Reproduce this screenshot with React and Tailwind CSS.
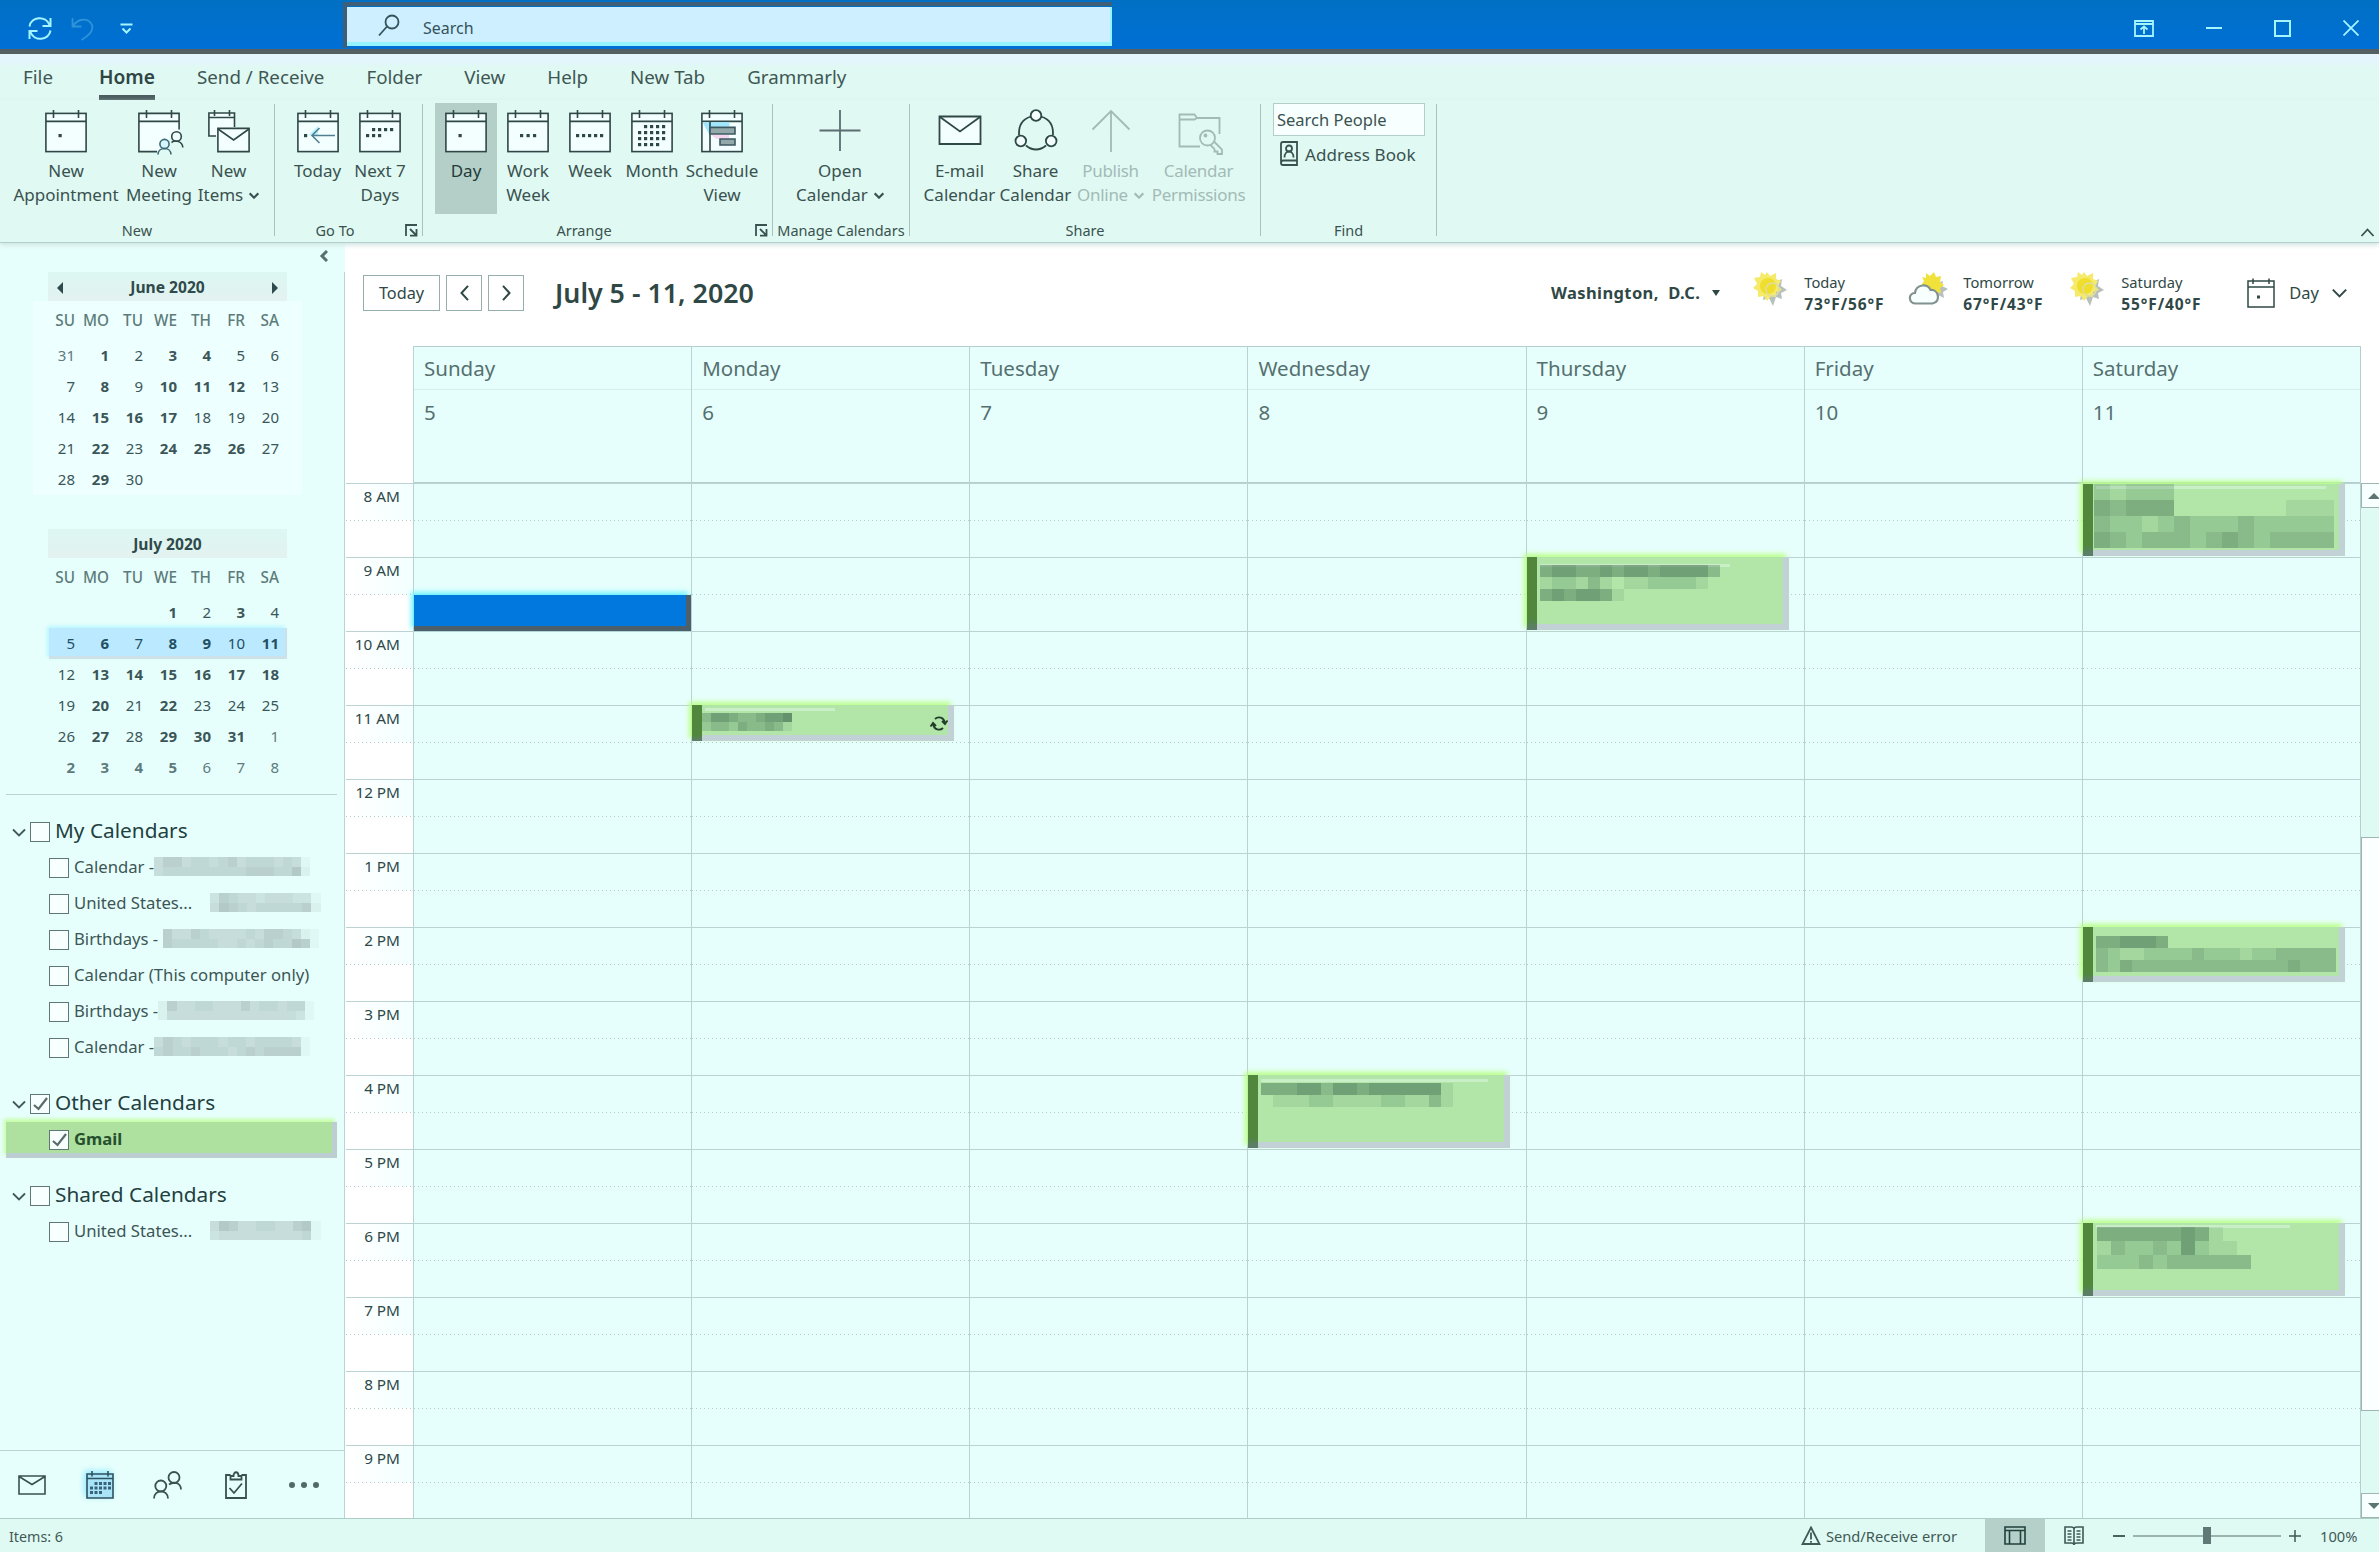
const weekDays = ['SU', 'MO', 'TU', 'WE', 'TH', 'FR', 'SA'];

// "b" marks a day with appointments, "g" a day of the neighbouring month
const months = [
  {
    name: 'June 2020',
    arrows: true,
    selected: -1,
    weeks: [
      '31g 1b 2 3b 4b 5 6',
      '7 8b 9 10b 11b 12b 13',
      '14 15b 16b 17b 18 19 20',
      '21 22b 23 24b 25b 26b 27',
      '28 29b 30 - - - -',
    ],
  },
  {
    name: 'July 2020',
    arrows: false,
    selected: 1,
    weeks: [
      '- - - 1b 2 3b 4',
      '5 6b 7 8b 9b 10 11b',
      '12 13b 14b 15b 16b 17b 18b',
      '19 20b 21 22b 23 24 25',
      '26 27b 28 29b 30b 31b 1g',
      '2bg 3bg 4bg 5bg 6g 7g 8g',
    ],
  },
];

const calendarGroups = [
  {
    title: 'My Calendars',
    checked: false,
    items: [
      { name: 'Calendar -', left: 'ml-0', mask: ['57756656756665651', '56666666667776682'] },
      { name: 'United States...', left: 'ml-[18px]', mask: ['476554555441', '587656666672'] },
      { name: 'Birthdays -', left: 'ml-[5px]', mask: ['75576555565776521', '76666655656766871'] },
      { name: 'Calendar (This computer only)' },
      { name: 'Birthdays -', left: 'ml-0', mask: ['27556655575665661', '25555555555555541'] },
      { name: 'Calendar -', left: 'ml-0', mask: ['57656665665666651', '67667666567677771'] },
    ],
  },
  {
    title: 'Other Calendars',
    checked: true,
    items: [{ name: 'Gmail', checked: true, active: true }],
  },
  {
    title: 'Shared Calendars',
    checked: false,
    items: [{ name: 'United States...', left: 'ml-[18px]', mask: ['587556655781', '455555555561'] }],
  },
];

const days = [
  { name: 'Sunday', date: 5, events: [] },
  {
    name: 'Monday',
    date: 6,
    events: [
      { top: 222, height: 36, cell: 9, padTop: 8, padLeft: 0, recurring: true, strip: { top: 3, width: 130 }, mask: ['3554334556', '2332433431'] },
    ],
  },
  { name: 'Tuesday', date: 7, events: [] },
  {
    name: 'Wednesday',
    date: 8,
    events: [
      { top: 592, height: 73, cell: 12, padTop: 8, padLeft: 3, strip: { top: 4, width: 227 }, mask: ['4445535545555551', '0111221111221131'] },
    ],
  },
  {
    name: 'Thursday',
    date: 9,
    events: [
      {
        top: 74,
        height: 73,
        cell: 12,
        padTop: 8,
        padLeft: 3,
        strip: { top: 7, width: 190 },
        mask: ['455445455455553', '122131011222210', '454554100000000'],
      },
    ],
  },
  { name: 'Friday', date: 10, events: [] },
  {
    name: 'Saturday',
    date: 11,
    events: [
      {
        top: 1,
        height: 72,
        cell: 16,
        padTop: 0,
        padLeft: 1,
        strip: { top: 2, width: 230 },
        mask: ['212220000000000', '434440000000111', '322123222322222', '432333234323333'],
      },
      { top: 444, height: 55, cell: 12, padTop: 9, padLeft: 3, mask: ['44555400000000000000', '32112222322212233333', '32433333333333334333'] },
      { top: 740, height: 73, cell: 14, padTop: 4, padLeft: 4, strip: { top: 2, width: 194 }, mask: ['44444454100', '13223252110', '22232333333'] },
    ],
  },
];

const hours = ['8 AM', '9 AM', '10 AM', '11 AM', '12 PM', '1 PM', '2 PM', '3 PM', '4 PM', '5 PM', '6 PM', '7 PM', '8 PM', '9 PM'];

// Pixelated block that hides private text
const Mask = ({ rows, width, height, color }) => (
  <div>
    {rows.map((row, i) => (
      <div key={i} className="flex">
        {row.split('').map((level, j) => (
          <div key={j} className={color} style={{ width, height, opacity: level / 10 }} />
        ))}
      </div>
    ))}
  </div>
);

const Chevron = ({ className, d = 'M1 1.5l6 6 6-6', weight = 1.8 }) => (
  <svg className={className} viewBox="0 0 14 9" fill="none" stroke="currentColor" strokeWidth={weight}>
    <path d={d} />
  </svg>
);

const CalendarIcon = ({ dots = [], children }) => (
  <svg className="h-11 w-[42px]" viewBox="0 0 42 44" fill="none" stroke="#2f4846" strokeWidth="1.6">
    <rect x="0.9" y="4.4" width="40.2" height="38.2" fill="#f3ffff" />
    <path d="M1 12.4h40M8.5 1v8M33.5 1v8" />
    {dots.map(([x, y]) => (
      <rect key={`${x}-${y}`} x={x} y={y} width="3.2" height="3.2" fill="#2f4846" stroke="none" />
    ))}
    {children}
  </svg>
);

const monthDots = [
  [13, 16], [19, 16], [25, 16], [31, 16],
  [7, 22], [13, 22], [19, 22], [25, 22], [31, 22],
  [7, 28], [13, 28], [19, 28], [25, 28], [31, 28],
  [7, 34], [13, 34], [19, 34], [25, 34],
];

const icons = {
  day: <CalendarIcon dots={[[13.5, 25]]} />,
  meeting: (
    <svg className="h-[46px] w-[46px]" viewBox="0 0 46 46" fill="none" stroke="#2f4846" strokeWidth="1.6">
      <path d="M19 42.6H.9V4.4h40.2v16" fill="#f3ffff" />
      <path d="M1 12.4h40M8.5 1v8M33.5 1v8" />
      <g stroke="#3b6a73">
        <circle cx="26.5" cy="35" r="4.6" fill="#d6f6ff" />
        <path d="M20 45.5c0-8 13-8 13 0" />
      </g>
      <circle cx="38.5" cy="27.5" r="4.8" fill="#effcff" />
      <path d="M33.5 33.5c4-3 11-1 11.3 5" />
    </svg>
  ),
  items: (
    <svg className="h-11 w-[42px]" viewBox="0 0 42 44" fill="none" stroke="#2f4846" strokeWidth="1.6">
      <path d="M8 27H.9V4h25.6v14" fill="#f3ffff" />
      <path d="M1 8.5h25M6.5 1v6M21.5 1v6" />
      <path d="M9.9 19.4h31.2v23.2H9.9z" fill="#f3ffff" />
      <path d="M10 20l15.6 11L41 20" />
    </svg>
  ),
  today: (
    <CalendarIcon dots={[[7, 25]]}>
      <path d="M12 26l9-9v10z" fill="#b9f0ff" stroke="none" />
      <path d="M15 26.5h23M22.5 19L15 26.5l7.500 7.500" stroke="#4f7f90" />
    </CalendarIcon>
  ),
  next7: <CalendarIcon dots={[[13, 19], [19, 19], [25, 19], [31, 19], [7, 25], [13, 25], [19, 25]]} />,
  workWeek: <CalendarIcon dots={[[13, 25], [19.5, 25], [26, 25]]} />,
  week: <CalendarIcon dots={[[7, 25], [13, 25], [19, 25], [25, 25], [31, 25]]} />,
  month: <CalendarIcon dots={monthDots} />,
  schedule: (
    <CalendarIcon>
      <path d="M1.500 13.200h27v4.500h-20v8z" fill="#9fe6ff" stroke="none" />
      <path d="M10 25.800h18v4H15z" fill="#f6d6ee" stroke="none" />
      <path d="M9 13v29" />
      <path d="M9 18.400h25v6.600H9zM19 30h15v6H19z" fill="#93a9a9" stroke="#3d5860" />
    </CalendarIcon>
  ),
  open: (
    <svg className="h-11 w-[42px]" viewBox="0 0 42 44" fill="none" stroke="#5a6d70" strokeWidth="1.8">
      <path d="M21 1v41M.5 21.500h41" />
    </svg>
  ),
  email: (
    <svg className="h-11 w-[44px]" viewBox="0 0 44 44" fill="none" stroke="#2f4846" strokeWidth="1.8">
      <path d="M1.500 7.500h41v27.500h-41z" fill="#f3ffff" />
      <path d="M2 8l20 14.500L42 8" />
    </svg>
  ),
  share: (
    <svg className="h-11 w-[44px]" viewBox="0 0 44 44" fill="none" stroke="#2f4846" strokeWidth="1.8">
      <path d="M17 7.500C8.500 10 4.500 17 5 26M27 7.500C35.500 10 39.500 17 39 26M12 36.500c6 5.300 14 5.300 20 0" />
      <circle cx="22" cy="6.500" r="5.300" fill="#f3ffff" />
      <circle cx="6.800" cy="32" r="5.300" fill="#f3ffff" />
      <circle cx="37.200" cy="32" r="5.300" fill="#f3ffff" />
    </svg>
  ),
  publish: (
    <svg className="h-11 w-[42px]" viewBox="0 0 42 44" fill="none" stroke="#a3bbb6" strokeWidth="1.8">
      <path d="M21 2v41M2.500 20.500L21 2l18.500 18.500" />
    </svg>
  ),
  permissions: (
    <svg className="h-[46px] w-[46px]" viewBox="0 0 46 46" fill="none" stroke="#a3bbb6" strokeWidth="1.8">
      <path d="M22 37.500H1.500V5.500h15l2.500 3.500h22.500v16M1.500 10.500h15l2.500-1.500" />
      <circle cx="29.500" cy="29" r="7.500" />
      <path d="M32.500 36l4 4v2.500h3v2.500h4.500v-4.500L35.500 32" />
      <circle cx="27.500" cy="26.500" r="1" />
    </svg>
  ),
};

const ribbonGroups = [
  {
    name: 'New',
    width: 'w-[274px]',
    pad: 'pl-[6px]',
    items: [
      { icon: icons.day, lines: ['New', 'Appointment'], width: 'w-[120px]' },
      { icon: icons.meeting, lines: ['New', 'Meeting'], width: 'w-[66px]', wide: true },
      { icon: icons.items, lines: ['New', 'Items'], width: 'w-[73px]', menu: true },
    ],
  },
  {
    name: 'Go To',
    width: 'w-[147px]',
    pad: 'pl-[10px]',
    launcher: true,
    items: [
      { icon: icons.today, lines: ['Today'], width: 'w-[65px]' },
      { icon: icons.next7, lines: ['Next 7', 'Days'], width: 'w-[60px]' },
    ],
  },
  {
    name: 'Arrange',
    width: 'w-[349px]',
    pad: 'pl-[12px]',
    launcher: true,
    items: [
      { icon: icons.day, lines: ['Day'], width: 'w-[62px]', active: true },
      { icon: icons.workWeek, lines: ['Work', 'Week'], width: 'w-[62px]' },
      { icon: icons.week, lines: ['Week'], width: 'w-[62px]' },
      { icon: icons.month, lines: ['Month'], width: 'w-[62px]' },
      { icon: icons.schedule, lines: ['Schedule', 'View'], width: 'w-[78px]' },
    ],
  },
  {
    name: 'Manage Calendars',
    width: 'w-[136px]',
    pad: 'pl-[22px]',
    items: [{ icon: icons.open, lines: ['Open', 'Calendar'], width: 'w-[90px]', menu: true }],
  },
  {
    name: 'Share',
    width: 'w-[350px]',
    pad: 'pl-[12px]',
    items: [
      { icon: icons.email, lines: ['E-mail', 'Calendar'], width: 'w-[75px]' },
      { icon: icons.share, lines: ['Share', 'Calendar'], width: 'w-[77px]' },
      { icon: icons.publish, lines: ['Publish', 'Online'], width: 'w-[73px]', menu: true, disabled: true },
      { icon: icons.permissions, lines: ['Calendar', 'Permissions'], width: 'w-[103px]', wide: true, disabled: true },
    ],
  },
];

const TitleBar = () => (
  <div className="flex h-[54px] shrink-0 items-center border-b-[5px] border-[#535f62] bg-linear-to-b from-[#0070c4] to-[#006fd6] text-[#a5f5ff]">
    <div className="flex w-[343px] items-center pl-[27px] pt-[8px]">
      <svg className="h-[25px] w-[26px]" viewBox="0 0 26 25" fill="none" stroke="currentColor" strokeWidth="2">
        <path d="M2.500 10.500C4 .5 19 -1 22.500 9M23.500 2v8h-8M23.500 14.500C22 24.500 7 26 3.500 16M2.500 23v-8h8" />
      </svg>
      <svg className="ml-[18px] h-[24px] w-[23px] text-[#2e93d8]" viewBox="0 0 23 24" fill="none" stroke="currentColor" strokeWidth="1.800">
        <path d="M1.500 1v8.500h9M2 9C7 1 17 1 20.500 7c3 6-3 12-10 16" />
      </svg>
      <svg className="ml-[26px] h-[12px] w-[13px]" viewBox="0 0 13 12" fill="none" stroke="currentColor" strokeWidth="2">
        <path d="M.5 1.500h12M2.500 5.500l4 4 4-4" />
      </svg>
    </div>
    <div className="mt-[1px] flex h-[46px] w-[769px] border-t-4 border-l-4 border-[#3f5f78]">
      <div className="mt-[1px] flex h-[39px] grow items-center border-r-2 border-b-4 border-[#93f3ff] bg-[#cdefff] pl-[31px] text-[16px] text-[#36525a]">
        <svg className="mt-[2px] mr-[23px] h-[23px] w-[22px]" viewBox="0 0 22 23" fill="none" stroke="currentColor" strokeWidth="1.800">
          <circle cx="14" cy="8" r="6.500" />
          <path d="M9 12.500L1 21.500" />
        </svg>
        <span className="pt-[7px]">Search</span>
      </div>
    </div>
    <div className="ml-auto flex items-center gap-[52px] pt-[7px] pr-[20px]">
      <svg className="h-[17px] w-[20px]" viewBox="0 0 20 17" fill="none" stroke="currentColor" strokeWidth="1.800">
        <path d="M1 1h18v15H1zM1 4h18M10 14V7M6.500 9.500L10 6.500l3.500 3" />
      </svg>
      <div className="h-[2px] w-[16px] bg-[#a5f5ff]" />
      <div className="h-[17px] w-[17px] border-2 border-[#a5f5ff]" />
      <svg className="h-[16px] w-[16px]" viewBox="0 0 16 16" stroke="currentColor" strokeWidth="1.800">
        <path d="M.5.5l15 15M15.500.5l-15 15" />
      </svg>
    </div>
  </div>
);

const Tabs = () => (
  <div className="flex h-[46px] items-center gap-[42px] bg-linear-to-b from-[#e5f5ff] from-10% to-[#e0f9f3] to-30% pl-[23px] text-[18.750px] text-[#3f5754]">
    {['File', 'Home', 'Send / Receive', 'Folder', 'View', 'Help', 'New Tab', 'Grammarly'].map((tab) => (
      <div
        key={tab}
        className={
          tab === 'Home'
            ? 'mt-[8px] ml-[4px] flex h-[38px] flex-col border-b-[5px] border-[#4b5d5f] text-[19.200px] font-semibold leading-[30px] text-[#2e4644]'
            : ''
        }
      >
        {tab}
      </div>
    ))}
  </div>
);

const RibbonItem = ({ item }) => (
  <div
    className={`flex h-[111px] flex-col items-center pt-[6px] ${item.width} ${item.active ? 'bg-[#b4cfc8] text-[#223b38]' : ''} ${
      item.disabled ? 'tracking-[-0.3px] text-[#a3bbb6]' : ''
    }`}
  >
    <div className={`h-[44px] ${item.wide ? 'pl-[4px]' : ''}`}>{item.icon}</div>
    <div className="mt-[6px] text-center text-[17px] leading-6 whitespace-nowrap">
      {item.lines.map((line, i) => (
        <div key={line} className="flex items-center justify-center">
          {line}
          {item.menu && i === 1 && <Chevron className="ml-[6px] h-[7px] w-[10px]" weight={3} />}
        </div>
      ))}
    </div>
  </div>
);

const Separator = () => <div className="mt-[1px] h-[132px] w-px bg-[#a9c2be]" />;

const Ribbon = () => (
  <div className="relative z-10 flex h-[143px] shrink-0 border-b border-[#b3cfcb] bg-[#e0f9f3] pt-[3px] text-[#3a524f] shadow-[0_2px_5px_#cfe3e0]">
    {ribbonGroups.map((group) => (
      <div key={group.name} className="flex">
        <div className={group.width}>
          <div className={`flex ${group.pad}`}>
            {group.items.map((item) => (
              <RibbonItem key={item.lines.join(' ')} item={item} />
            ))}
          </div>
          <div className="mt-1 flex h-6 items-center">
            <div className="grow text-center text-[14.500px] leading-6 whitespace-nowrap">{group.name}</div>
            {group.launcher && (
              <svg className="mr-[4px] ml-[10px] h-[13px] w-[13px]" viewBox="0 0 13 13" fill="none" stroke="currentColor" strokeWidth="1.800">
                <path d="M1 12V1h11M5 5l6 6M11.500 5v6.700H5" />
              </svg>
            )}
          </div>
        </div>
        <Separator />
      </div>
    ))}
    <div className="w-[175px]">
      <div className="flex h-[111px] flex-col pl-[12px]">
        <div className="flex h-[33px] w-[152px] items-center border border-[#b3cdca] bg-[#f8ffff] pt-[2px] pl-[3px] text-[16.500px]">Search People</div>
        <div className="mt-[4px] flex items-center pl-[7px] text-[17px] tracking-[0.1px]">
          <svg className="mr-[7px] h-[25px] w-[18px]" viewBox="0 0 18 25" fill="none" stroke="currentColor" strokeWidth="1.800">
            <path d="M1 3q0-2 2-2h14v23H3q-2 0-2-2zM1 22q0-2.500 2-2.500h14" />
            <circle cx="9" cy="7.500" r="3" />
            <path d="M4.500 16.500c0-8 9-8 9 0" />
          </svg>
          <span className="pt-[2px]">Address Book</span>
        </div>
      </div>
      <div className="mt-1 text-center text-[14.500px] leading-6">Find</div>
    </div>
    <Separator />
    <Chevron className="absolute right-[4px] bottom-[5px] h-[9px] w-[15px]" d="M1 8l6-6.500L13 8" />
  </div>
);

const Checkbox = ({ checked }) => (
  <div className="flex h-5 w-5 items-center justify-center border border-[#5f7775] bg-[#f7ffff]">
    {checked && (
      <svg className="h-[14px] w-[15px]" viewBox="0 0 15 14" fill="none" stroke="#5a6b6a" strokeWidth="2.200">
        <path d="M1 8l4.500 4L14 1" />
      </svg>
    )}
  </div>
);

const MiniMonth = ({ month }) => (
  <div className={`h-[257px] ${month.arrows ? '[&>div]:bg-[#f4ffff]/50' : ''}`}>
    <div className="mr-[57px] ml-[48px] flex h-[29px] items-center justify-between bg-linear-to-b from-[#dcf7f2] to-[#e3f2f0] px-[9px] pt-[2px] text-[15.600px] font-bold text-[#2f4a4a]">
      <svg className={`h-[12px] w-[6px] ${month.arrows ? '' : 'invisible'}`} viewBox="0 0 6 12" fill="currentColor">
        <path d="M6 0v12L0 6z" />
      </svg>
      {month.name}
      <svg className={`h-[12px] w-[6px] ${month.arrows ? '' : 'invisible'}`} viewBox="0 0 6 12" fill="currentColor">
        <path d="M0 0v12l6-6z" />
      </svg>
    </div>
    <div className="mr-[42px] ml-[33px] flex h-[39px] items-center pl-[8px] text-[15.300px] font-medium text-[#5c7b7a]">
      {weekDays.map((day) => (
        <div key={day} className="w-[34px] text-right">
          {day}
        </div>
      ))}
    </div>
    {month.weeks.map((week, i) => (
      <div key={week} className="mr-[42px] ml-[33px] pl-[16px] pr-[15px]">
        <div
          className={`flex h-[31px] items-center ${
            i === month.selected
              ? 'border-r-2 border-b-3 border-[#cde2e8] bg-[#bbe9ff] pt-[2px] text-[#1f5063] shadow-[-2px_-2px_4px_#b9f6ff]'
              : 'text-[#3b5658]'
          }`}
        >
          <div className="-ml-[8px] flex text-[15px]">
            {week.split(' ').map((day, j) => (
              <div
                key={j}
                className={`w-[34px] text-right ${day.includes('b') ? 'font-bold' : ''} ${day.includes('g') ? 'text-[#5d7b7c]' : ''}`}
              >
                {day.replace(/[-bg]/g, '')}
              </div>
            ))}
          </div>
        </div>
      </div>
    ))}
  </div>
);

const CalendarRow = ({ item }) => (
  <div
    className={`ml-[6px] mr-[7px] flex h-9 items-center pl-[43px] text-[16.700px] text-[#3c5655] ${
      item.active
        ? 'border-r-[5px] border-b-[5px] border-[#bcced2] bg-[#aee09f] pt-[5px] font-bold text-[#27502f] shadow-[-2px_-3px_4px_#c4ffa0]'
        : ''
    }`}
  >
    <Checkbox checked={item.checked} />
    <span className="mb-[3px] ml-[5px] whitespace-nowrap">{item.name}</span>
    {item.mask && (
      <div className={`mb-[3px] ${item.left}`}>
        <Mask rows={item.mask} width={9.2} height={9.5} color="bg-[#a5bcba]" />
      </div>
    )}
  </div>
);

const Sidebar = () => (
  <div className="flex w-[345px] shrink-0 flex-col bg-[#e7fffc]">
    <div className="flex h-[29px] items-start justify-end pt-[7px] pr-[17px]">
      <svg className="h-[12px] w-[9px]" viewBox="0 0 9 12" fill="none" stroke="#557270" strokeWidth="3">
        <path d="M8 1L3 6l5 5" />
      </svg>
    </div>
    <div className="h-[522px] border-r border-[#b9d4d2]">
      {months.map((month) => (
        <MiniMonth key={month.name} month={month} />
      ))}
    </div>
    <div className="flex grow flex-col border-r border-[#b9d4d2]">
      <div className="mr-[7px] ml-[6px] h-px bg-[#b9d4d2]" />
      <div className="flex grow flex-col gap-5 pt-[19px]">
        {calendarGroups.map((group) => (
          <div key={group.title}>
            <div className="flex h-9 items-center pl-[12px] text-[20.800px] text-[#22403f]">
              <Chevron className="mr-[4px] h-[9px] w-[14px] text-[#41595a]" />
              <Checkbox checked={group.checked} />
              <span className="mb-[3px] ml-[5px]">{group.title}</span>
            </div>
            {group.items.map((item, i) => (
              <CalendarRow key={i} item={item} />
            ))}
          </div>
        ))}
      </div>
      <div className="flex h-[68px] items-center border-t border-[#b9d4d2] pl-[18px]">
        <svg className="h-5 w-7" viewBox="0 0 28 20" fill="none" stroke="#39504f" strokeWidth="1.600">
          <path d="M1 1h26v18H1zM1 1.500l13 8 13-8" />
        </svg>
        <svg className="ml-10 h-7 w-7 drop-shadow-[-2px_-2px_3px_#8fe8ff]" viewBox="0 0 28 28" fill="none" stroke="#2e5260" strokeWidth="1.600">
          <path d="M1 3h26v24H1z" fill="#a9e4f8" />
          <path d="M1 7.500h26M6 0v5.500M22 0v5.500" />
          <path d="M8.500 12.500h17M4 17h21.500M4 21.500h13" stroke="#38647a" strokeWidth="3" strokeDasharray="3 1.500" />
        </svg>
        <svg className="ml-[39px] h-[28px] w-[29px]" viewBox="0 0 29 28" fill="none" stroke="#39504f" strokeWidth="1.800">
          <circle cx="7.800" cy="15" r="5.500" />
          <path d="M1 27.500c0-9.500 14-9.500 14 0" />
          <circle cx="21" cy="6.500" r="5.500" />
          <path d="M16 13.500c5-3.500 12-1.500 12 5" />
        </svg>
        <svg className="ml-[43px] h-[28px] w-[22px]" viewBox="0 0 22 28" fill="none" stroke="#39504f" strokeWidth="1.800">
          <path d="M5.500 4H1v23h20V4h-4.500" />
          <path d="M5.500 8.500V5h3C8.500 0 13.500 0 13.500 5h3v3.500zM4.500 17l4.500 5 8-9.500" />
        </svg>
        <div className="ml-[42px] flex gap-[6px]">
          <div className="h-[6px] w-[6px] rounded-full bg-[#526968]" />
          <div className="h-[6px] w-[6px] rounded-full bg-[#526968]" />
          <div className="h-[6px] w-[6px] rounded-full bg-[#526968]" />
        </div>
      </div>
    </div>
  </div>
);

const Sun = () => (
  <svg className="h-[34px] w-[36px]" viewBox="0 0 36 34">
    <path d="M21 4l3 6 6-3-1 7 6 4-6 3 1 6-6-2-3 9-4-8-6 2 1-6-6-3 6-4z" fill="#b7c0bd" />
    <path d="M15 0l3 4 6-3 0 6 5 2-3 5 4 4-6 2 0 5-5-1-4 5-3-5-6 1 0-6-5-3 4-4-3-6 6-1 1-5 4 3z" fill="#f5ea6a" />
    <circle cx="16" cy="14" r="8" fill="#efdf2c" />
    <circle cx="20.500" cy="17.500" r="6.500" fill="none" stroke="#e0dda0" strokeWidth="1.500" />
  </svg>
);

const PartlyCloudy = () => (
  <svg className="h-[34px] w-[42px]" viewBox="0 0 42 34">
    <path d="M27 6l2 5 6-2-1 5 6 3-5 3 1 6-6-3-6 6-4-18z" fill="#b7c0bd" />
    <path d="M18 1l4 3 4-4 2 5 5-1-1 6 4 3-4 3 1 5-5-1-3 4-6-5-5-7 2-3-2-4 4 1z" fill="#f1e13b" />
    <path
      d="M8 31.500c-8 0-8-10.500-1-10.500C8 12 20 11 22.500 18c8-1 11 12 2 13.500z"
      fill="#f7ffff"
      stroke="#81918f"
      strokeWidth="2.200"
    />
  </svg>
);

const forecasts = [
  { day: 'Today', temp: '73°F/56°F', icon: <Sun />, box: 'w-[53px] pl-[1px]' },
  { day: 'Tomorrow', temp: '67°F/43°F', icon: <PartlyCloudy />, box: 'w-[54px] -ml-[1px] mr-[1px]' },
  { day: 'Saturday', temp: '55°F/40°F', icon: <Sun />, box: 'w-[54px] pl-[2px]' },
];

const CalendarHeader = () => (
  <div className="mb-[3px] flex h-[100px] shrink-0 items-center pl-[18px] text-[#2f4846]">
    <div className="flex gap-[6px] text-[16.300px]">
      <div className="flex h-9 w-[77px] items-center justify-center border border-[#96aeac]">Today</div>
      <div className="flex h-9 w-9 items-center justify-center border border-[#96aeac]">
        <svg className="h-4 w-[9px]" viewBox="0 0 9 16" fill="none" stroke="currentColor" strokeWidth="2">
          <path d="M8 .8L1.500 8 8 15.200" />
        </svg>
      </div>
      <div className="flex h-9 w-9 items-center justify-center border border-[#96aeac]">
        <svg className="h-4 w-[9px]" viewBox="0 0 9 16" fill="none" stroke="currentColor" strokeWidth="2">
          <path d="M1 .8L7.500 8 1 15.200" />
        </svg>
      </div>
    </div>
    <div className="ml-[31px] text-[26.800px] font-semibold whitespace-nowrap">July 5 - 11, 2020</div>
    <div className="ml-auto flex items-center pr-[31px]">
      <div className="text-[16.500px] font-bold tracking-[0.4px] whitespace-pre">Washington,  D.C.</div>
      <svg className="ml-[12px] h-[6px] w-[8px]" viewBox="0 0 8 6" fill="currentColor">
        <path d="M0 0h8L4 6z" />
      </svg>
      <div className="ml-[31px] flex gap-[24px]">
        {forecasts.map((f) => (
          <div key={f.day} className="flex w-[134px] items-center">
            <div className={`shrink-0 pb-[8px] ${f.box}`}>{f.icon}</div>
            <div className="text-[14.700px] leading-[22px] whitespace-nowrap">
              <div>{f.day}</div>
              <div className="text-[15.500px] font-bold tracking-[0.900px]">{f.temp}</div>
            </div>
          </div>
        ))}
      </div>
      <svg className="ml-[46px] h-[30px] w-[28px]" viewBox="0 0 28 30" fill="none" stroke="currentColor" strokeWidth="1.500">
        <path d="M1 3h26v26H1zM1 9h26M6 .5V6M22 .5V6" />
        <path d="M10 17.500h3v3h-3z" fill="currentColor" stroke="none" />
      </svg>
      <div className="ml-[14px] text-[16.500px]">Day</div>
      <Chevron className="ml-[12px] h-[10px] w-[17px]" />
    </div>
  </div>
);

const HalfHourLine = () => <div className="h-px bg-[repeating-linear-gradient(90deg,#b3cccd_0_1px,transparent_1px_4px)]" />;

const Event = ({ event }) => (
  <div
    className="absolute left-0 flex w-[262px] border-r-[6px] border-b-[6px] border-[#c2d1d6] bg-[#b1e6a8] shadow-[-3px_-3px_5px_#b9ff85]"
    style={{ top: event.top, height: event.height }}
  >
    <div className="-mb-[6px] w-[10px] shrink-0 bg-linear-to-b from-[#50873d] from-85% to-[#5f7b70]" />
    {event.strip && <div className="absolute left-[13px] h-[3px] bg-[#c9efc6]" style={event.strip} />}
    <div style={{ paddingTop: event.padTop, paddingLeft: event.padLeft }}>
      <Mask rows={event.mask} width={event.cell} height={event.cell} color="bg-[#2f5a44]" />
    </div>
    {event.recurring && (
      <svg className="absolute right-0 bottom-[4px] h-[15px] w-[18px]" viewBox="0 0 18 15" fill="none" stroke="#213b2c" strokeWidth="1.800">
        <path d="M5 3c3-3 9-2 10 4M13 12c-3 3-9 2-10-4M12 5l3 3 2.500-3.500M6 10L3 7 .5 10.500" />
      </svg>
    )}
  </div>
);

const CalendarGrid = () => (
  <div className="flex grow">
    <div className="w-[68px] shrink-0 overflow-hidden">
      <div className="h-[137px]" />
      <div className="h-[1035px] overflow-hidden pl-[1px]">
        {hours.map((hour) => (
          <div key={hour} className="h-[74px] border-t border-[#bad2d2]">
            <div className="h-[36px] bg-linear-to-r from-white to-[#f3ffff] pt-[1px] pr-[13px] text-right text-[15.300px] leading-[22px] text-[#2d4848]">
              {hour}
            </div>
            <HalfHourLine />
          </div>
        ))}
      </div>
    </div>
    <div className="flex w-[1948px] shrink-0 border-r border-[#b5cfcf] bg-[#e7fffc]">
      {days.map((day) => (
        <div key={day.name} className="relative flex-1 border-l border-[#bad2d2]">
          <div className="h-[137px] border-t border-b border-[#b5cfcf] text-[20.500px] text-[#557070]">
            <div className="h-[43px] border-b border-[#d3efec] pl-[10px] leading-[43px]">{day.name}</div>
            <div className="pt-[2px] pl-[10px] leading-[41px]">{day.date}</div>
          </div>
          <div className="relative h-[1035px]">
            <div className="h-full overflow-hidden">
              {hours.map((hour) => (
                <div key={hour} className="h-[74px] border-t border-[#bad2d2] pt-[36px]">
                  <HalfHourLine />
                </div>
              ))}
            </div>
            {day.name === 'Sunday' && (
              <div className="absolute top-[112px] left-0 h-[36px] w-full border-r-[5px] border-b-[5px] border-[#4c5f6b] bg-[#0078de] shadow-[-3px_-3px_5px_#6ff4ff]" />
            )}
            {day.events.map((event) => (
              <Event key={event.top} event={event} />
            ))}
          </div>
        </div>
      ))}
    </div>
    <div className="flex w-[18px] shrink-0 flex-col overflow-hidden pt-[137px]">
      <div className="flex h-[25px] w-[26px] shrink-0 items-center justify-center border border-[#9db5b3] bg-[#f8ffff]">
        <svg className="h-[6px] w-[12px]" viewBox="0 0 12 6" fill="#5c7573">
          <path d="M0 6h12L6 0z" />
        </svg>
      </div>
      <div className="h-[329px] shrink-0 bg-[#dff9f3]" />
      <div className="h-[574px] w-[26px] shrink-0 border border-[#9db5b3] bg-[#fbffff]" />
      <div className="grow bg-[#dff9f3]" />
      <div className="flex h-[25px] w-[26px] shrink-0 items-center justify-center border border-[#9db5b3] bg-[#f8ffff]">
        <svg className="h-[6px] w-[12px]" viewBox="0 0 12 6" fill="#5c7573">
          <path d="M0 0h12L6 6z" />
        </svg>
      </div>
    </div>
  </div>
);

const StatusBar = () => (
  <div className="flex h-[34px] shrink-0 items-center border-t border-[#aeccc6] bg-[#dff9f3] pl-[9px] text-[14.700px] text-[#3f5956]">
    <div className="pt-[2px] text-[14.300px]">Items: 6</div>
    <div className="ml-auto flex h-full items-center pr-[20px]">
      <svg className="mr-[5px] h-[19px] w-[20px]" viewBox="0 0 20 19" fill="none" stroke="currentColor" strokeWidth="1.800">
        <path d="M10 1.500l8.500 16.500h-17zM10 6.500v7M10 15v1.800" />
      </svg>
      <span className="pt-[2px]">Send/Receive error</span>
      <div className="ml-[28px] flex h-full w-[60px] items-center justify-center bg-[#b5d0c9]">
        <svg className="h-[19px] w-[22px]" viewBox="0 0 22 19" fill="none" stroke="#22403c" strokeWidth="1.600">
          <path d="M1 1h20v17H1zM1 4.500h20M5.500 4.500V18M16.500 4.500V18" />
        </svg>
      </div>
      <svg className="ml-[19px] h-[20px] w-[20px]" viewBox="0 0 20 20" fill="none" stroke="currentColor" strokeWidth="1.600">
        <path d="M1 1h6q3 0 3 2 0-2 3-2h6v16h-6q-3 0-3 2 0-2-3-2H1zM10 3v16M3.500 5h4M3.500 8h4M3.500 11h4M3.500 14h4M12.500 5h4M12.500 8h4M12.500 11h4M12.500 14h4" />
      </svg>
      <div className="ml-[29px] h-[2px] w-[12px] bg-[#4a6360]" />
      <div className="relative ml-[8px] h-[2px] w-[148px] bg-[#9db3af]">
        <div className="absolute -top-[8px] left-[70px] h-[17px] w-[8px] bg-[#5e7976]" />
      </div>
      <svg className="ml-[8px] h-[12px] w-[12px]" viewBox="0 0 12 12" stroke="currentColor" strokeWidth="1.500">
        <path d="M0 6h12M6 0v12" />
      </svg>
      <span className="ml-[19px] w-[39px] pt-[2px] whitespace-nowrap">100%</span>
    </div>
  </div>
);

const App = () => {
  return (
    <div className="flex h-[1552px] w-[2379px] flex-col overflow-hidden bg-white font-['Noto_Sans','Open_Sans',sans-serif]">
      <TitleBar />
      <Tabs />
      <Ribbon />
      <div className="flex h-[1275px] shrink-0">
        <Sidebar />
        <div className="flex grow flex-col">
          <CalendarHeader />
          <CalendarGrid />
        </div>
      </div>
      <StatusBar />
    </div>
  );
};

export default App;
